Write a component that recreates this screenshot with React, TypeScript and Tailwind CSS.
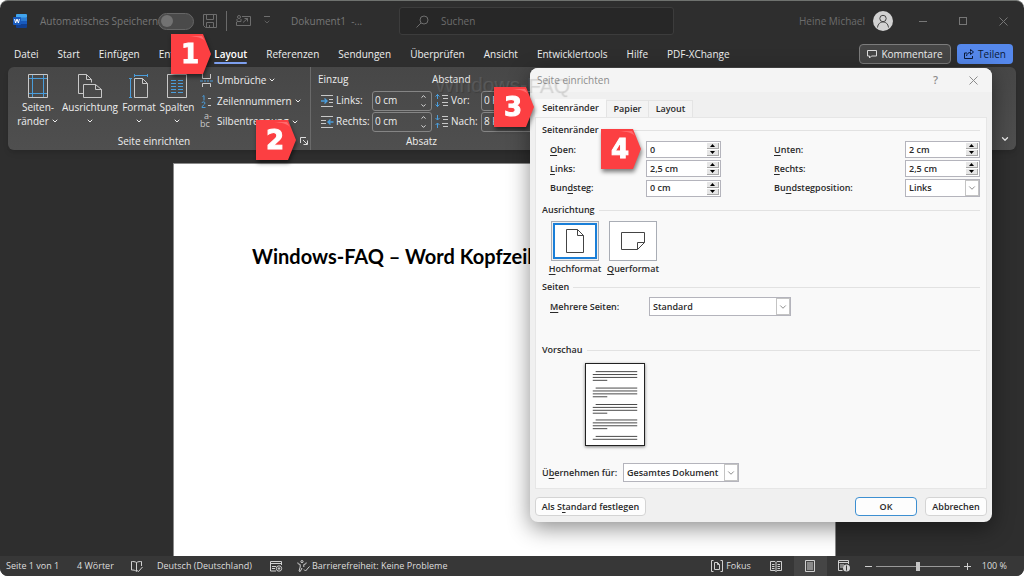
import { useState } from "react";
import type { ReactNode } from "react";
import { ChevronDown, ChevronUp } from "lucide-react";
import clsx from "clsx";

const TABS_BEFORE = ["Datei", "Start", "Einfügen", "Entwurf"];
const TABS_AFTER = [
  "Referenzen",
  "Sendungen",
  "Überprüfen",
  "Ansicht",
  "Entwicklertools",
  "Hilfe",
  "PDF-XChange",
];

// y position, start and end of every text line in the preview page
const PREVIEW_LINES = [0, 1, 2, 3, 4].flatMap((block) =>
  [0, 1, 2, 3]
    .filter((line) => block < 4 || line < 2)
    .map((line) => ({
      y: 7 + block * 17 - (block > 2 ? 1 : 0) + line * 3,
      x1: line === 0 ? 10 : 7,
      x2: line === 3 ? 22 : 53,
    })),
);

/* ---------- icons ---------- */

function WordIcon() {
  return (
    <svg viewBox="0 0 14 14" className="h-3.5 w-3.5 shrink-0" aria-hidden="true">
      <rect x="3" y="0" width="11" height="4" rx="1" fill="#41a5ee" />
      <rect x="3" y="3.5" width="11" height="4" fill="#2b7cd3" />
      <rect x="3" y="7" width="11" height="3.5" fill="#185abd" />
      <path d="M3 10h11v3a1 1 0 0 1-1 1H4a1 1 0 0 1-1-1z" fill="#103f91" />
      <rect x="0" y="3" width="8" height="8" rx="1" fill="#185abd" />
      <path d="M1.6 5l1 4 1.4-4 1.4 4 1-4" fill="none" stroke="#fff" strokeWidth="1" />
    </svg>
  );
}

function SaveIcon() {
  return (
    <svg viewBox="0 0 14 14" className="h-3.5 w-3.5 shrink-0" fill="none" stroke="#6d6d6d" aria-hidden="true">
      <path d="M.5.5h13v13h-11l-2-2zM3.5.5v5h7v-5M3.5 13.5v-5h7v5M6.5 13v-2" />
    </svg>
  );
}

function QuickIcon() {
  return (
    <svg viewBox="0 0 15 12" className="h-3 w-[15px] shrink-0" fill="none" stroke="#6d6d6d" aria-hidden="true">
      <path d="M6 1.500h8.500v9H.5V7M7 7.500l4.500-4M8.500 3.500h3v3" />
      <circle cx="3" cy="2" r="1.500" />
      <path d="M1 4v2.500h4V4" />
    </svg>
  );
}

function MarginsIcon() {
  return (
    <svg viewBox="0 0 20 24" className="h-6 w-5" fill="none" aria-hidden="true">
      <path d="M.5.5h19v23H.5z" stroke="#c8c8c8" />
      <path d="M4.500 1v22M15.500 1v22M1 4.500h18M1 19.500h18" stroke="#4a9ddb" />
    </svg>
  );
}

function OrientationIcon() {
  return (
    <svg viewBox="0 0 24 24" className="h-6 w-6" fill="none" stroke="#c8c8c8" aria-hidden="true">
      <path d="M5 19.500H.5V.5h8l5 5v3M8.500.5v5h5" />
      <path d="M5.500 10.500h12l6 5v8h-18zM17.500 10.500v5h6" />
    </svg>
  );
}

function SizeIcon() {
  return (
    <svg viewBox="0 0 20 24" className="h-6 w-5" fill="none" aria-hidden="true">
      <path d="M5 1.500h13M5.500 0v3M18.500 0v3M1.500 5v18M0 4.500h3M0 23.500h3" stroke="#4a9ddb" />
      <path d="M5.500 4.500h8l5 5v14h-13zM13.500 4.500v5h5" stroke="#c8c8c8" />
    </svg>
  );
}

function ColumnsIcon() {
  return (
    <svg viewBox="0 0 20 24" className="h-6 w-5" fill="none" aria-hidden="true">
      <path d="M.5.5h19v23H.5z" stroke="#c8c8c8" />
      <path
        d="M4 6.500h5M4 9.500h5M4 12.500h5M4 15.500h5M4 18.500h5M11 6.500h5M11 9.500h5M11 12.500h5M11 15.500h5M11 18.500h5"
        stroke="#4a9ddb"
      />
    </svg>
  );
}

function BreaksIcon() {
  return (
    <svg viewBox="0 0 13 13" className="h-[13px] w-[13px]" fill="none" aria-hidden="true">
      <path d="M2.500 0v4.500h8V0M2.500 13V9.500h8V13" stroke="#c8c8c8" />
      <path d="M0 7h3M4 7h2M7 7h2M10 7h3" stroke="#4a9ddb" />
    </svg>
  );
}

function LineNumbersIcon() {
  return (
    <svg viewBox="0 0 13 13" className="h-[13px] w-[13px]" fill="none" aria-hidden="true">
      <path d="M2.500 1.500L4 .5V5.500M2 8c0-1.500 3-1.500 3 0 0 1.500-3 2.500-3 4.500h3.500" stroke="#4a9ddb" />
      <path d="M8 3.500h3M8 10.500h3" stroke="#c8c8c8" />
    </svg>
  );
}

function HyphenIcon() {
  return (
    <span className="relative block h-[13px] w-[13px] text-[9px] leading-none text-[#c8c8c8]" aria-hidden="true">
      <span className="absolute bottom-0 left-0">bc</span>
      <span className="absolute -top-1 left-1">a-</span>
    </span>
  );
}

function IndentIcon({ flip = false }: { flip?: boolean }) {
  return (
    <svg viewBox="0 0 13 12" className="h-3 w-[13px] shrink-0" fill="none" aria-hidden="true">
      {flip ? (
        <>
          <path d="M0 .5h12M0 4.500h5M0 7.500h5M0 11.500h12" stroke="#c8c8c8" />
          <path d="M12.500 6H7.500M9.500 3.500L7 6l2.500 2.500" stroke="#4a9ddb" strokeWidth="1.400" />
        </>
      ) : (
        <>
          <path d="M0 .5h12M8 4.500h4M8 7.500h4M0 11.500h12" stroke="#c8c8c8" />
          <path d="M0 6h5.500M3.500 3.500L6 6 3.500 8.500" stroke="#4a9ddb" strokeWidth="1.400" />
        </>
      )}
    </svg>
  );
}

function SpacingIcon({ after = false }: { after?: boolean }) {
  return (
    <svg viewBox="0 0 14 13" className="h-[13px] w-3.5 shrink-0" fill="none" aria-hidden="true">
      <path d="M7 1.500h6M8 4.500h5M7 8.500h6M8 11.500h5" stroke="#c8c8c8" />
      {after ? (
        <path d="M2.500 0v5M.5 3l2 2 2-2M2.500 13V8M.5 10l2-2 2 2" stroke="#4a9ddb" />
      ) : (
        <path d="M2.500 0v5M.5 2.500l2-2 2 2M2.500 13V8M.5 10.500l2 2 2-2" stroke="#4a9ddb" />
      )}
    </svg>
  );
}

function LauncherIcon() {
  return (
    <svg viewBox="0 0 8 8" className="h-2 w-2" fill="none" stroke="#dcdcdc" aria-hidden="true">
      <path d="M.5 6V.5H6M3 3l4 4M7.500 3.500v4h-4" />
    </svg>
  );
}

/* ---------- title bar and tabs ---------- */

function TitleBar() {
  return (
    <header className="flex h-10 items-center whitespace-nowrap text-[#777777]">
      <div className="flex w-[399px] shrink-0 items-center pl-[13px]">
        <WordIcon />
        <label htmlFor="autosave" className="ml-[13px] w-[118px] shrink-0">
          Automatisches Speichern
        </label>
        <span className="relative flex h-[17px] w-9 shrink-0 items-center">
          <input
            id="autosave"
            type="checkbox"
            role="switch"
            className="h-[17px] w-9 appearance-none rounded-full border border-[#666666] bg-[#4a4a4a]"
          />
          <span className="pointer-events-none absolute left-[3px] h-3 w-3 rounded-full bg-[#727272]" />
        </span>
        <button type="button" aria-label="Speichern" className="ml-[9px]">
          <SaveIcon />
        </button>
        <span className="mx-[9px] h-5 w-px bg-[#6a6a6a]" />
        <button type="button" aria-label="Schnellzugriff">
          <QuickIcon />
        </button>
        <button type="button" aria-label="Symbolleiste anpassen" className="ml-3 flex flex-col items-center gap-px">
          <span className="h-px w-1.5 bg-[#6d6d6d]" />
          <ChevronDown className="h-2 w-2" />
        </button>
        <span className="ml-5 whitespace-pre">Dokument1  -...</span>
      </div>
      <label className="flex h-7 w-[275px] items-center gap-3 rounded-[3px] border border-[#3c3c3c] bg-[#272727] pl-4">
        <svg viewBox="0 0 13 13" className="h-[13px] w-[13px]" fill="none" stroke="#6d6d6d" aria-hidden="true">
          <circle cx="8" cy="5" r="4" />
          <path d="M5 8L.5 12.500" />
        </svg>
        <input
          type="search"
          aria-label="Suchen"
          placeholder="Suchen"
          className="min-w-0 flex-1 bg-transparent outline-none placeholder:text-[#6c6c6c]"
        />
      </label>
      <div className="flex flex-1 items-center justify-end pr-4">
        <span className="text-[#6c6c6c]">Heine Michael</span>
        <span className="ml-2 flex h-5 w-5 items-center justify-center rounded-full bg-[#d2d2d2]">
          <svg viewBox="0 0 14 14" className="h-3.5 w-3.5" fill="none" stroke="#444444" aria-hidden="true">
            <circle cx="7" cy="4.500" r="3.200" />
            <path d="M1.500 13.500c.5-4 3-5.500 5.500-5.500s5 1.500 5.500 5.500" />
          </svg>
        </span>
        <button type="button" aria-label="Minimieren" className="ml-[26px] h-px w-2 bg-[#777777]" />
        <button type="button" aria-label="Maximieren" className="ml-8 h-2 w-2 border border-[#777777]" />
        <button type="button" aria-label="Schließen" className="ml-8">
          <svg viewBox="0 0 9 9" className="h-[9px] w-[9px]" stroke="#777777" aria-hidden="true">
            <path d="M.5.5l8 8M8.500.5l-8 8" />
          </svg>
        </button>
      </div>
    </header>
  );
}

function TabRow() {
  return (
    <nav className="flex h-[26px] items-center pr-[11px] pl-3.5 font-medium text-[#eeeeee]">
      <div className="flex flex-1 items-center gap-[19px]">
        {TABS_BEFORE.map((tab) => (
          <a key={tab} href="#">
            {tab}
          </a>
        ))}
        <a href="#" aria-current="page" className="relative font-semibold text-white">
          Layout
          <span className="absolute inset-x-0 -bottom-0.5 h-0.5 rounded-full bg-[#7d9fee]" />
        </a>
        {TABS_AFTER.map((tab) => (
          <a key={tab} href="#">
            {tab}
          </a>
        ))}
      </div>
      <button
        type="button"
        className="flex h-5 w-[92px] items-center justify-center gap-1 rounded border border-[#7c7c7c] bg-[#464646]"
      >
        <svg viewBox="0 0 10 9" className="h-[9px] w-2.5" fill="none" stroke="#dddddd" aria-hidden="true">
          <path d="M.5.500h9v5.500H4.500L2.500 8V6h-2z" />
        </svg>
        Kommentare
      </button>
      <button
        type="button"
        className="ml-1.5 flex h-5 w-14 items-center justify-center gap-1 rounded bg-[#5588ec] text-[#0b1a38]"
      >
        <svg viewBox="0 0 10 10" className="h-2.5 w-2.5" fill="none" stroke="#0b1a38" aria-hidden="true">
          <path d="M3 4H.5v5.500h8V7M2.500 7c.5-2.500 2-3.500 4-3.500V5.500L9.500 3 6.500.5v2" />
        </svg>
        Teilen
      </button>
    </nav>
  );
}

/* ---------- ribbon ---------- */

interface BigButtonProps {
  icon: ReactNode;
  lines: string[];
  className: string;
}

function BigButton({ icon, lines, className }: BigButtonProps) {
  return (
    <button type="button" className={clsx("flex flex-col items-center", className)}>
      {icon}
      <span className="mt-0.5 leading-[14px] whitespace-nowrap">{lines[0]}</span>
      <span className="flex h-3.5 items-center gap-0.5 leading-[14px]">
        {lines[1]}
        <ChevronDown className="h-2 w-2" strokeWidth={3} />
      </span>
    </button>
  );
}

function SmallButton({ icon, label }: { icon: ReactNode; label: string }) {
  return (
    <button type="button" className="flex h-[21px] items-center whitespace-nowrap">
      {icon}
      <span className="mr-0.5 ml-1">{label}</span>
      <ChevronDown className="h-2 w-2" strokeWidth={3} />
    </button>
  );
}

interface RibbonSpinProps {
  id: string;
  icon: ReactNode;
  label: string;
  value: string;
  labelClass: string;
}

function RibbonSpin({ id, icon, label, value, labelClass }: RibbonSpinProps) {
  return (
    <div className="flex h-[21px] items-center pl-[3px]">
      {icon}
      <label htmlFor={id} className={clsx("ml-0.5", labelClass)}>
        {label}
      </label>
      <div className="flex h-5 w-[60px] items-center rounded-[3px] border border-[#858585] pr-1">
        <input id={id} defaultValue={value} className="w-0 min-w-0 flex-1 bg-transparent pl-0.5 outline-none" />
        <span className="flex flex-col gap-0.5">
          <button type="button" aria-label={`${label} erhöhen`}>
            <ChevronUp className="h-[7px] w-[7px]" strokeWidth={3} />
          </button>
          <button type="button" aria-label={`${label} verringern`}>
            <ChevronDown className="h-[7px] w-[7px]" strokeWidth={3} />
          </button>
        </span>
      </div>
    </div>
  );
}

function Ribbon() {
  return (
    <section className="mx-2 flex h-[83px] rounded-md bg-linear-to-b from-[#474747] to-[#4f4f4f] font-medium text-[#eeeeee] shadow-md">
      <div className="flex w-[303px] flex-col border-r border-[#6a6a6a]">
        <div className="flex min-h-0 flex-1 pt-[7px] pl-2">
          <BigButton icon={<MarginsIcon />} lines={["Seiten-", "ränder"]} className="w-11" />
          <BigButton icon={<OrientationIcon />} lines={["Ausrichtung"]} className="w-[60px]" />
          <BigButton icon={<SizeIcon />} lines={["Format"]} className="w-[38px]" />
          <BigButton icon={<ColumnsIcon />} lines={["Spalten"]} className="w-[38px]" />
          <div className="-mt-1 ml-1 flex flex-col">
            <SmallButton icon={<BreaksIcon />} label="Umbrüche" />
            <SmallButton icon={<LineNumbersIcon />} label="Zeilennummern" />
            <SmallButton icon={<HyphenIcon />} label="Silbentrennung" />
          </div>
        </div>
        <div className="flex h-[18px] items-center pr-0.5">
          <span className="flex-1 text-center">Seite einrichten</span>
          <button type="button" aria-label="Seite einrichten öffnen">
            <LauncherIcon />
          </button>
        </div>
      </div>
      <div className="flex w-[222px] flex-col pl-[7px]">
        <div className="flex flex-1 pt-px">
          <div>
            <p className="leading-[22px]">Einzug</p>
            <RibbonSpin id="indent-left" icon={<IndentIcon />} label="Links:" value="0 cm" labelClass="w-9" />
            <RibbonSpin id="indent-right" icon={<IndentIcon flip />} label="Rechts:" value="0 cm" labelClass="w-9" />
          </div>
          <div>
            <p className="leading-[22px]">Abstand</p>
            <RibbonSpin id="space-before" icon={<SpacingIcon />} label="Vor:" value="0 Pt." labelClass="w-[30px]" />
            <RibbonSpin id="space-after" icon={<SpacingIcon after />} label="Nach:" value="8 Pt." labelClass="w-[30px]" />
          </div>
        </div>
        <div className="h-[18px] pr-2 text-center leading-[18px]">Absatz</div>
      </div>
      <button type="button" aria-label="Menüband reduzieren" className="mr-1.5 mb-1.5 ml-auto self-end">
        <ChevronDown className="h-2.5 w-2.5" strokeWidth={3} />
      </button>
    </section>
  );
}

/* ---------- dialog ---------- */

/** label with the shortcut letter underlined */
function Access({ text, at = 0 }: { text: string; at?: number }) {
  return (
    <>
      {text.slice(0, at)}
      <u className="underline-offset-2">{text[at]}</u>
      {text.slice(at + 1)}
    </>
  );
}

function SectionTitle({ children, className }: { children: string; className?: string }) {
  return (
    <h3 className={clsx("flex h-4 items-center gap-1", className)}>
      {children}
      <span className="h-px flex-1 bg-[#e2e2e2]" />
    </h3>
  );
}

function Spin({ id, value }: { id: string; value: string }) {
  return (
    <div className="flex h-[17px] border border-[#b4b4bc] bg-white p-px">
      <input id={id} defaultValue={value} className="w-0 min-w-0 flex-1 pl-0.5 outline-none" />
      <span className="flex w-3 flex-col gap-px">
        <button
          type="button"
          aria-label="Mehr"
          className="flex h-1.5 items-center justify-center border-r border-b border-[#a8a8a8] bg-[#e6e6e6]"
        >
          <svg viewBox="0 0 5 3" className="h-[3px] w-[5px]" aria-hidden="true">
            <path d="M0 3L2.500 0 5 3z" />
          </svg>
        </button>
        <button
          type="button"
          aria-label="Weniger"
          className="flex h-1.5 items-center justify-center border-r border-b border-[#a8a8a8] bg-[#e6e6e6]"
        >
          <svg viewBox="0 0 5 3" className="h-[3px] w-[5px]" aria-hidden="true">
            <path d="M0 0L2.500 3 5 0z" />
          </svg>
        </button>
      </span>
    </div>
  );
}

function Select({ id, value, className }: { id: string; value: string; className: string }) {
  return (
    <div className={clsx("relative", className)}>
      <select id={id} className="h-full w-full appearance-none border border-[#b4b4bc] bg-white pl-[3px] outline-none">
        <option>{value}</option>
      </select>
      <span className="pointer-events-none absolute inset-y-px right-px flex w-3.5 items-center justify-center border border-[#c4c4c4] text-[#777777]">
        <ChevronDown className="h-2.5 w-2.5" />
      </span>
    </div>
  );
}

function PageSetupDialog() {
  const [landscape, setLandscape] = useState(false);

  return (
    <div
      role="dialog"
      aria-labelledby="dialog-title"
      className="absolute top-[67px] right-8 w-[462px] rounded-lg bg-[#f0f0f0] text-[9px] font-semibold text-[#2a2a2a] shadow-[0_6px_22px_rgba(0,0,0,0.45)]"
    >
      <div className="flex h-6 items-center rounded-t-lg bg-[#f4f4f4] pr-3.5 pl-[7px] text-[#8c8c8c]">
        <h2 id="dialog-title" className="flex-1 text-[10px] font-normal">
          Seite einrichten
        </h2>
        <button type="button" aria-label="Hilfe" className="text-[11px]">
          ?
        </button>
        <button type="button" aria-label="Schließen" className="ml-[31px]">
          <svg viewBox="0 0 9 9" className="h-[9px] w-[9px]" stroke="#8c8c8c" aria-hidden="true">
            <path d="M.5.5l8 8M8.500.5l-8 8" />
          </svg>
        </button>
      </div>

      <div role="tablist" className="flex items-end px-[5px] pt-[7px]">
        <button type="button" role="tab" aria-selected="true" className="h-[18px] w-[71px] bg-[#f9f9f9]">
          Seitenränder
        </button>
        <button type="button" role="tab" aria-selected="false" className="h-[17px] w-[43px] border border-b-0 border-[#e4e4e4] bg-[#f3f3f3]">
          Papier
        </button>
        <button type="button" role="tab" aria-selected="false" className="h-[17px] w-11 border border-b-0 border-l-0 border-[#e4e4e4] bg-[#f3f3f3]">
          Layout
        </button>
      </div>

      <form className="mx-[5px] border border-[#e6e6e6] bg-[#f9f9f9] px-1.5 pt-1 pb-1.5">
        <SectionTitle>Seitenränder</SectionTitle>
        <div className="mt-[3px] grid grid-cols-[104px_75px_1fr_75px] items-center gap-y-0.5">
          <label htmlFor="top" className="pl-2 leading-4">
            <Access text="Oben:" />
          </label>
          <Spin id="top" value="0" />
          <label htmlFor="bottom" className="pl-[53px] leading-4">
            <Access text="Unten:" />
          </label>
          <Spin id="bottom" value="2 cm" />
          <label htmlFor="left" className="pl-2 leading-4">
            <Access text="Links:" />
          </label>
          <Spin id="left" value="2,5 cm" />
          <label htmlFor="right" className="pl-[53px] leading-4">
            <Access text="Rechts:" />
          </label>
          <Spin id="right" value="2,5 cm" />
          <label htmlFor="gutter" className="pl-2 leading-4">
            <Access text="Bundsteg:" at={3} />
          </label>
          <Spin id="gutter" value="0 cm" />
          <label htmlFor="gutter-pos" className="pl-[53px] leading-4">
            <Access text="Bundstegposition:" at={2} />
          </label>
          <Select id="gutter-pos" value="Links" className="h-[18px]" />
        </div>

        <SectionTitle className="mt-[5px]">Ausrichtung</SectionTitle>
        <div className="mt-[3px] flex gap-2.5 pl-[9px]">
          <button type="button" aria-pressed={!landscape} onClick={() => setLandscape(false)} className="flex w-12 flex-col items-center">
            <span className="flex h-10 w-12 border border-[#a9adb5] bg-[#f0f0f0] p-px">
              <span className={clsx("flex flex-1 items-center justify-center border-2 bg-white", landscape ? "border-white" : "border-[#1a7fd8]")}>
                <svg viewBox="0 0 18 24" className="h-6 w-[18px]" fill="none" stroke="#444444" aria-hidden="true">
                  <path d="M.5.5h11l6 6v17H.5zM11.500.5v6h6" />
                </svg>
              </span>
            </span>
            <span className="leading-4">
              <Access text="Hochformat" />
            </span>
          </button>
          <button type="button" aria-pressed={landscape} onClick={() => setLandscape(true)} className="flex w-12 flex-col items-center">
            <span className="flex h-10 w-12 border border-[#a9adb5] bg-[#f0f0f0]">
              <span className={clsx("flex flex-1 items-center justify-center border-2 bg-white", landscape ? "border-[#1a7fd8]" : "border-white")}>
                <svg viewBox="0 0 24 18" className="h-[18px] w-6" fill="none" stroke="#444444" aria-hidden="true">
                  <path d="M.5.5h23v10l-7 7H.5zM16.500 17.500v-7h7" />
                </svg>
              </span>
            </span>
            <span className="leading-4">
              <Access text="Querformat" />
            </span>
          </button>
        </div>

        <SectionTitle className="mt-0.5">Seiten</SectionTitle>
        <div className="mt-0.5 flex items-center">
          <label htmlFor="pages" className="w-[107px] pl-2">
            <Access text="Mehrere Seiten:" />
          </label>
          <Select id="pages" value="Standard" className="h-[19px] w-[142px]" />
        </div>

        <SectionTitle className="mt-[26px]">Vorschau</SectionTitle>
        <svg
          viewBox="0 0 60 83"
          className="mt-[5px] ml-[43px] h-[83px] w-[60px] border border-[#222222] bg-white shadow-[0_1px_3px_rgba(0,0,0,0.5)]"
          stroke="#444444"
          role="img"
          aria-label="Vorschau"
        >
          {PREVIEW_LINES.map((l) => (
            <line key={l.y} x1={l.x1} x2={l.x2} y1={l.y + 0.5} y2={l.y + 0.5} />
          ))}
        </svg>

        <div className="mt-[17px] flex items-center">
          <label htmlFor="apply-to" className="w-[81px] whitespace-nowrap">
            <Access text="Übernehmen für:" at={1} />
          </label>
          <Select id="apply-to" value="Gesamtes Dokument" className="h-[19px] w-[116px]" />
        </div>
      </form>

      <div className="flex gap-2 px-[5px] pt-2 pb-1.5">
        <button type="button" className="mr-auto h-[19px] w-[111px] rounded border border-[#d4d4d4] bg-[#fdfdfd] whitespace-nowrap">
          <Access text="Als Standard festlegen" at={5} />
        </button>
        <button type="button" className="h-[19px] w-[62px] rounded border border-[#3d8fd1] bg-[#fdfdfd]">
          OK
        </button>
        <button type="button" className="h-[19px] w-[62px] rounded border border-[#d4d4d4] bg-[#fdfdfd]">
          Abbrechen
        </button>
      </div>
    </div>
  );
}

/* ---------- status bar ---------- */

function StatusBar() {
  return (
    <footer className="flex h-5 items-center bg-[#373737] pr-[17px] pl-1.5 text-[9px] font-medium whitespace-nowrap text-[#dedede]">
      <span className="w-[71px]">Seite 1 von 1</span>
      <span className="w-[54px]">4 Wörter</span>
      <svg viewBox="0 0 12 11" className="mr-3.5 h-[11px] w-3" fill="none" stroke="#d0d0d0" aria-hidden="true">
        <path d="M5.500 1.500C4 .5 2 .5.5.5v8.500c2 0 3.500 0 5 1.500zM5.500 1.500C7 .5 9 .5 10.500.5V5M6 9.500l1.500 1L11.500 6" />
      </svg>
      <span className="w-[113px]">Deutsch (Deutschland)</span>
      <svg viewBox="0 0 13 11" className="mr-3.5 h-[11px] w-[13px]" fill="none" stroke="#d0d0d0" aria-hidden="true">
        <path d="M6 10H.5V.5h11V4M.5 2.500h11M2 5.500h4M2 7.500h3" />
        <circle cx="9" cy="7.500" r="2.700" />
        <circle cx="9" cy="7.500" r=".8" fill="#d0d0d0" />
      </svg>
      <svg viewBox="0 0 13 12" className="mr-0.5 h-3 w-[13px]" fill="none" stroke="#d0d0d0" aria-hidden="true">
        <circle cx="5" cy="1.600" r="1.100" />
        <path d="M.8 2.500c-.5 1 .2 1.300 2.400 2v2.500L2 11l1.200.5L5 8M9.200 2.500c.5 1-.2 1.300-2.400 2V7M7 9.500l1.500 1.500L12.500 6.500" />
      </svg>
      <span>Barrierefreiheit: Keine Probleme</span>

      <div className="ml-auto flex h-full items-center">
        <button type="button" className="flex items-center gap-[3px]">
          <svg viewBox="0 0 12 12" className="h-3 w-3" fill="none" stroke="#d0d0d0" aria-hidden="true">
            <path d="M2.500.5h-2v11h2M9.500.5h2v11h-2M3.500 2.500h3l2 2v5h-5zM6.500 2.500v2h2" />
          </svg>
          Fokus
        </button>
        <button type="button" aria-label="Lesemodus" className="ml-[19px]">
          <svg viewBox="0 0 12 11" className="h-[11px] w-3" fill="none" stroke="#d0d0d0" aria-hidden="true">
            <path d="M.5.5h4.500l1 1 1-1h4.500v9H7l-1 1-1-1H.5zM6 1.500v9M2 3.500h2.500M2 5.500h2.500M2 7.500h2.500M7.500 3.500H10M7.500 5.500H10M7.500 7.500H10" />
          </svg>
        </button>
        <button type="button" aria-label="Seitenlayout" className="ml-3 flex h-full w-[33px] items-center justify-center bg-[#454545]">
          <svg viewBox="0 0 10 12" className="h-3 w-2.5" fill="none" stroke="#d0d0d0" aria-hidden="true">
            <path d="M.5.5h9v11h-9zM2 3h6M2 5h6M2 7h6M2 9h6" />
          </svg>
        </button>
        <button type="button" aria-label="Weblayout" className="ml-[11px]">
          <svg viewBox="0 0 13 12" className="h-3 w-[13px]" fill="none" stroke="#d0d0d0" aria-hidden="true">
            <path d="M4.500 10.500h-4V.5h10V4M.5 2.500h10M2 5h4M2 7h3" />
            <circle cx="8.500" cy="8" r="3.500" fill="#d0d0d0" stroke="none" />
            <path d="M8.500 5.500v5" stroke="#373737" />
          </svg>
        </button>
        <button type="button" aria-label="Verkleinern" className="ml-3.5 h-px w-[7px] bg-[#d0d0d0]" />
        <input
          type="range"
          aria-label="Zoom"
          min={0}
          max={200}
          defaultValue={100}
          className="mx-1 h-2.5 w-[84px] appearance-none bg-transparent [&::-webkit-slider-runnable-track]:h-px [&::-webkit-slider-runnable-track]:bg-[#9a9a9a] [&::-webkit-slider-thumb]:-mt-1 [&::-webkit-slider-thumb]:h-[9px] [&::-webkit-slider-thumb]:w-1 [&::-webkit-slider-thumb]:appearance-none [&::-webkit-slider-thumb]:bg-[#c6c6c6]"
        />
        <button type="button" aria-label="Vergrößern">
          <svg viewBox="0 0 7 7" className="h-[7px] w-[7px]" stroke="#d0d0d0" aria-hidden="true">
            <path d="M0 3.500h7M3.500 0v7" />
          </svg>
        </button>
        <span className="ml-[11px]">100 %</span>
      </div>
    </footer>
  );
}

/** red numbered arrow that lies over the window */
function Callout({ step, className }: { step: number; className: string }) {
  return (
    <div className={clsx("absolute h-10 w-10 drop-shadow-[1px_3px_2px_rgba(0,0,0,0.5)]", className)}>
      <svg viewBox="0 0 40 40" className="absolute inset-0 h-full w-full" aria-hidden="true">
        <path d="M0 0h32l8 20-8 20H0z" fill="#fc3f42" />
        <path d="M18 2h13l3 5c-3-3.500-8-4-16-5z" fill="#ff6a6c" />
      </svg>
      <span className="relative flex h-full w-[38px] items-center justify-center font-['DejaVu_Sans',sans-serif] text-[26px] font-bold text-white [-webkit-text-stroke:1px_white]">
        {step}
      </span>
    </div>
  );
}

export default function App() {
  return (
    <div className="relative flex h-screen flex-col overflow-hidden rounded-lg border-t border-[#6f726f] bg-[#2e2e2e] font-['Open_Sans','Noto_Sans',sans-serif] text-[10px]">
      <TitleBar />
      <TabRow />
      <Ribbon />
      <main className="flex min-h-0 flex-1 justify-center pt-3.5 pr-[15px]">
        <article className="w-[661px] bg-white pt-[76px] pl-[78px] shadow-[0_0_0_1px_#8a8a8a]">
          <h1 className="font-['Lato',sans-serif] text-xl leading-8 font-bold whitespace-nowrap text-black">
            Windows-FAQ – Word Kopfzeile
          </h1>
        </article>
      </main>
      <StatusBar />

      <PageSetupDialog />
      <span
        aria-hidden="true"
        className="pointer-events-none absolute top-[68px] left-[435px] font-['Liberation_Sans',sans-serif] text-[21px] leading-8 text-white/10 [text-shadow:1px_1px_1px_rgba(0,0,0,0.15)]"
      >
        Windows-FAQ
      </span>
      <Callout step={1} className="top-[33px] left-[171px]" />
      <Callout step={2} className="top-[119px] left-64" />
      <Callout step={3} className="top-[86px] left-[494px]" />
      <Callout step={4} className="top-32 left-[601px]" />
    </div>
  );
}
